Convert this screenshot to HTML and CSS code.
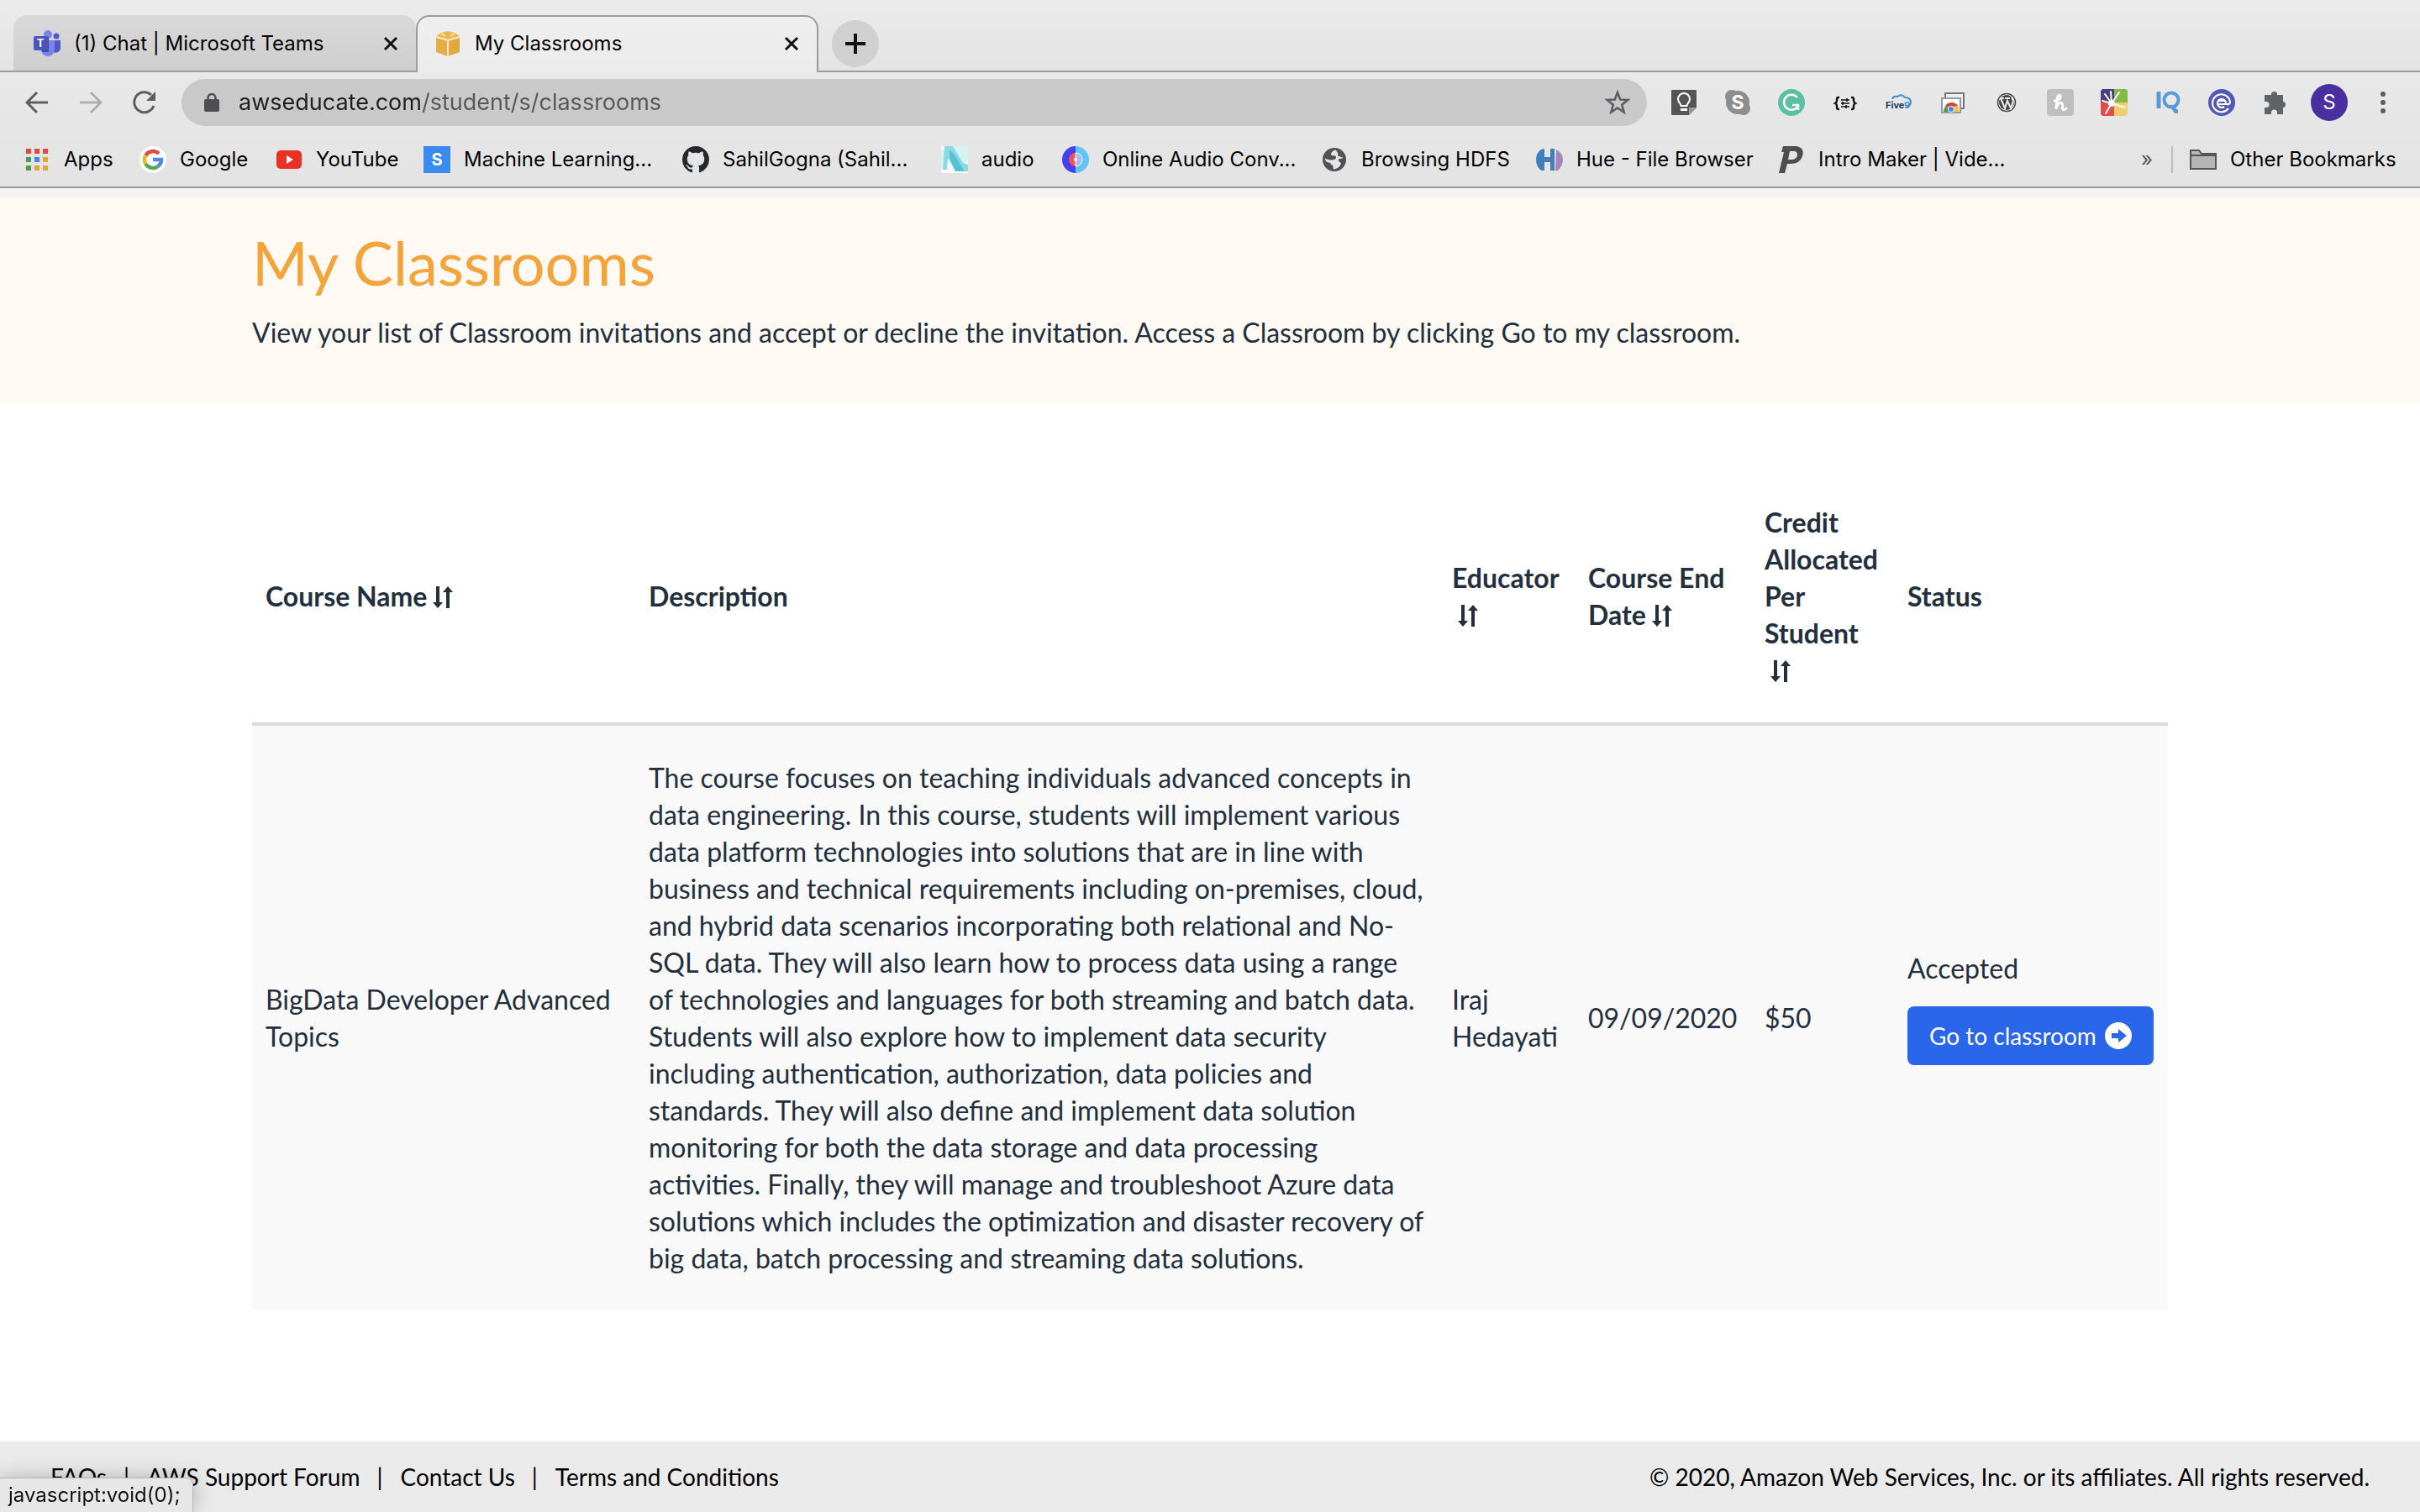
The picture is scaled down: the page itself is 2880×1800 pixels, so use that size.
FILE: index.html
```html
<!DOCTYPE html>
<html lang="en">
<head>
<meta charset="utf-8">
<title>My Classrooms</title>
<link rel="stylesheet" href="styles.css">
</head>
<body>
<svg class="defs" aria-hidden="true">
  <symbol id="close" viewBox="0 0 20 20"><path d="M3 3l14 14M17 3L3 17" fill="none" stroke="#111" stroke-width="3"/></symbol>
  <symbol id="sort" viewBox="0 0 24 26"><path d="M4 0h4v19h4l-6 7-6-7h4zM16 26h4V7h4l-6-7-6 7h4z" fill="#232f3e"/></symbol>
</svg>
<header class="browser">
  <div class="tabs">
    <div class="tab">
      <svg class="icon" viewBox="0 0 32 32"><circle cx="17" cy="5" r="5" fill="#7b83eb"/><circle cx="27" cy="7" r="3.5" fill="#5059c9"/><path d="M22 12h10v9a6 6 0 0 1-9 5z" fill="#5059c9"/><path d="M9 12h16v11a8 8 0 0 1-16 0z" fill="#7b83eb"/><path d="M9 8h9v18h-8z" fill="#4049a5"/><rect y="7" width="17" height="17" rx="2" fill="#4b53bc"/><text x="8" y="20" text-anchor="middle" class="glyph" font-size="13" fill="#fff">T</text></svg>
      <span class="tab-title">(1) Chat | Microsoft Teams</span>
      <button class="plain" aria-label="Close tab"><svg class="close"><use href="#close"/></svg></button>
    </div>
    <div class="tab active">
      <svg class="icon" viewBox="0 0 32 32"><path d="M2 8l14 4v19L2 26z" fill="#e5ad45"/><path d="M30 8l-14 4v19l14-5z" fill="#e2a840"/><path d="M2 7L8 3l8-2 8 2 6 4-14 4z" fill="#f0b746"/><path d="M16 11v20M2 8l14 4 14-4M8 4l5 3M24 4l-5 3" fill="none" stroke="#f8e6c3" stroke-width="2"/></svg>
      <span class="tab-title">My Classrooms</span>
      <button class="plain" aria-label="Close tab"><svg class="close"><use href="#close"/></svg></button>
    </div>
    <button class="new-tab" aria-label="New tab"><svg width="24" height="24" viewBox="0 0 24 24"><path d="M12 0v24M0 12h24" stroke="#111" stroke-width="4"/></svg></button>
  </div>
  <div class="toolbar">
    <button class="nav" aria-label="Back"><svg viewBox="0 0 28 28"><path d="M27 14H3M14 2L2 14l12 12" fill="none" stroke="#5b5e62" stroke-width="3"/></svg></button>
    <button class="nav" aria-label="Forward"><svg viewBox="0 0 28 28"><path d="M1 14h24M14 2l12 12-12 12" fill="none" stroke="#aeb0b2" stroke-width="3"/></svg></button>
    <button class="nav" aria-label="Reload"><svg viewBox="0 0 28 28"><path d="M25 18A12 12 0 1 1 22 5" fill="none" stroke="#5b5e62" stroke-width="3"/><path d="M27 1v11H16z" fill="#5b5e62"/></svg></button>
    <div class="address">
      <svg class="lock" width="18" height="22" viewBox="0 0 18 22"><rect y="7" width="18" height="15" rx="2" fill="#4d4f52"/><path d="M4.500 9V5.500a4.500 4.500 0 0 1 9 0V9" fill="none" stroke="#4d4f52" stroke-width="2.400"/></svg>
      <input class="url" type="text" aria-label="Address" value="awseducate.com/student/s/classrooms">
      <button class="plain" aria-label="Bookmark this page"><svg width="30" height="30" viewBox="0 0 30 30"><path d="M15 3l3.200 8.500 9 .5-7 5.700 2.400 8.800-7.600-5-7.600 5 2.400-8.800-7-5.700 9-.5z" fill="none" stroke="#5b5e62" stroke-width="2.600"/></svg></button>
    </div>
    <div class="extensions">
      <button class="ext" aria-label="Keep"><svg viewBox="0 0 32 32"><path d="M2 1h28a1 1 0 0 1 1 1v20l-9 9H2a1 1 0 0 1-1-1V2a1 1 0 0 1 1-1z" fill="#555"/><path d="M31 22l-9 9v-9z" fill="#999"/><path d="M12.500 20c0-3-3.500-4-3.500-8a7 7 0 0 1 14 0c0 4-3.500 5-3.500 8z" fill="none" stroke="#fff" stroke-width="2"/><path d="M12 23h8v3h-8z" fill="#fff"/></svg></button>
      <button class="ext" aria-label="Skype"><svg viewBox="0 0 32 32"><circle cx="16" cy="16" r="14" fill="#8d8d8d"/><circle cx="9" cy="9" r="8" fill="#8d8d8d"/><circle cx="23" cy="23" r="8" fill="#8d8d8d"/><text x="16" y="24" text-anchor="middle" class="glyph" font-size="23" fill="#fff">S</text></svg></button>
      <button class="ext" aria-label="Grammarly"><svg viewBox="0 0 32 32"><circle cx="16" cy="16" r="16" fill="#5bc0a0"/><path d="M23 10a9 9 0 1 0 1 10M17 19h7v6" fill="none" stroke="#fff" stroke-width="2.600"/></svg></button>
      <button class="ext" aria-label="JSON viewer"><svg viewBox="0 0 32 32"><path d="M9 10H8q-2 0-2 2v2q0 2-2 3 2 1 2 3v2q0 2 2 2h1M23 10h1q2 0 2 2v2q0 2 2 3-2 1-2 3v2q0 2-2 2h-1" fill="none" stroke="#111" stroke-width="2.400"/><path d="M11 13h10M11 17h10M11 21h10M18 11v4M13 15v4M17 19v4" stroke="#111" stroke-width="1.600"/></svg></button>
      <button class="ext" aria-label="Five9"><svg viewBox="0 0 32 32"><path d="M8 12q1-4 6-3 5-4 9 1 7 0 7 6-1 5-5 5" fill="none" stroke="#3f8fc8" stroke-width="2"/><text x="0" y="23" class="glyph" font-size="11" fill="#12385b">Five</text><text x="22" y="23" class="glyph" font-size="11" fill="#3f8fc8">9</text></svg></button>
      <button class="ext" aria-label="Remote desktop"><svg viewBox="0 0 32 32"><path d="M7 5h22v18H7z" fill="#eee" stroke="#777" stroke-width="2"/><path d="M3 11h22v17H3z" fill="#fff" stroke="#999" stroke-width="2"/><path d="M5 27a9 9 0 0 1 3-7l6 7z" fill="#45a05d"/><path d="M7 20a9 9 0 0 1 15 0l-8 4z" fill="#cf4539"/><path d="M22 20q2 3 1 7h-9v-6z" fill="#efc44d"/><circle cx="14" cy="24" r="3.500" fill="#4a7fe6" stroke="#fff"/></svg></button>
      <button class="ext" aria-label="WordPress"><svg viewBox="0 0 32 32"><circle cx="16" cy="16" r="10.500" fill="#fff" stroke="#464646" stroke-width="1.500"/><circle cx="16" cy="16" r="9" fill="#464646"/><path d="M9 11l5 12 3-9 4 9 3-9-2-4M8 11h5M14 11h6" fill="none" stroke="#eee" stroke-width="2"/></svg></button>
      <button class="ext" aria-label="Honey"><svg viewBox="0 0 32 32"><rect width="32" height="32" rx="4" fill="#bfbfbf"/><path d="M9 14c5 0 8-3 7-6-2-2-4 1-4 6l-1 10c1-6 4-9 7-7 2 2-1 5 1 7 1 1 3 0 4-1" fill="none" stroke="#fff" stroke-width="3" stroke-linecap="round"/></svg></button>
      <button class="ext" aria-label="Screen capture"><svg viewBox="0 0 32 32"><path d="M2 0h14v16H0V2z" fill="#4d3d86"/><path d="M16 0h14l2 2v14H16z" fill="#82bb49"/><path d="M0 16h16v16H2l-2-2z" fill="#df4e48"/><path d="M16 16h16v14l-2 2H16z" fill="#edce70"/><path d="M13 17L2 14M13 17L5 6M13 17L12 3M13 17L22 4M13 17l16 5M13 17L6 29" stroke="#fff" stroke-width="2" stroke-linecap="round"/><circle cx="13" cy="17" r="4" fill="#fff"/></svg></button>
      <button class="ext" aria-label="IQ"><svg viewBox="0 0 32 32"><path d="M5 3v20" stroke="#5b9bd3" stroke-width="5"/><circle cx="20" cy="13" r="8.500" fill="none" stroke="#5b9bd3" stroke-width="4"/><path d="M17 19h4l7 6v4h-4z" fill="#5b9bd3"/></svg></button>
      <button class="ext" aria-label="Email finder"><svg viewBox="0 0 32 32"><circle cx="16" cy="16" r="16" fill="#5357b5"/><path d="M24 23a10.500 10.500 0 1 1 2-7q-1 3-4 2H12M21 17a5 5 0 1 0-2 4M11 14h10" fill="none" stroke="#fff" stroke-width="2.200"/></svg></button>
      <button class="ext" aria-label="Extensions"><svg viewBox="0 0 32 32"><path d="M3 7h8V5a4 4 0 0 1 7 0v2h7v8h1a4 4 0 0 1 0 7h-1v8h-7v-2a3.500 3.500 0 0 0-7 0v2H3v-8h2a3.500 3.500 0 0 0 0-7H3z" fill="#5f6368"/></svg></button>
      <button class="ext" aria-label="Profile"><span class="avatar">S</span></button>
      <button class="ext" aria-label="Menu"><svg viewBox="0 0 32 32"><circle cx="16" cy="6" r="3" fill="#5b5e62"/><circle cx="16" cy="16" r="3" fill="#5b5e62"/><circle cx="16" cy="26" r="3" fill="#5b5e62"/></svg></button>
    </div>
  </div>
  <nav class="bookmarks">
    <a href="#"><svg class="icon" viewBox="0 0 32 32"><path d="M3 3h6v6H3zM13 3h6v6h-6zM23 3h6v6h-6z" fill="#e0493d"/><path d="M3 13h6v6H3zM3 23h6v6H3z" fill="#4b9a5a"/><path d="M13 13h6v6h-6z" fill="#3f86ee"/><path d="M23 13h6v6h-6zM13 23h6v6h-6zM23 23h6v6h-6z" fill="#e5a535"/></svg>Apps</a>
    <a href="#"><svg class="icon" viewBox="0 0 32 32"><circle cx="16" cy="16" r="16" fill="#fff"/><g fill="none" stroke-width="4.500"><path d="M23 9A10 10 0 0 0 7.300 11" stroke="#dc4e41"/><path d="M7.300 11a10 10 0 0 0 0 10" stroke="#f1b52b"/><path d="M7.300 21A10 10 0 0 0 22 24" stroke="#57a65a"/><path d="M16 16h10q0 5-4 8" stroke="#5087ec"/></g></svg>Google</a>
    <a href="#"><svg class="icon" viewBox="0 0 32 32"><rect x="1" y="5" width="30" height="22" rx="5" fill="#e93223"/><path d="M13 11l8 5-8 5z" fill="#fff"/></svg>YouTube</a>
    <a href="#"><svg class="icon" viewBox="0 0 32 32"><path d="M0 0h32v32H0z" fill="#3b8bee"/><text x="16" y="23" text-anchor="middle" class="glyph" font-size="20" fill="#fff">S</text></svg>Machine Learning...</a>
    <a href="#"><svg class="icon" viewBox="0 0 16 16"><path fill="#24292e" d="M8 0C3.580 0 0 3.580 0 8c0 3.540 2.290 6.530 5.470 7.590.4.070.55-.17.55-.38 0-.19-.01-.82-.01-1.490-2.010.37-2.530-.49-2.690-.94-.09-.23-.48-.94-.82-1.130-.28-.15-.68-.52-.01-.53.63-.01 1.080.58 1.230.82.72 1.210 1.870.87 2.330.66.070-.52.28-.87.51-1.070-1.780-.2-3.640-.89-3.640-3.950 0-.87.31-1.590.82-2.150-.08-.2-.36-1.020.08-2.120 0 0 .67-.21 2.200.82.64-.18 1.320-.27 2-.27s1.360.09 2 .27c1.530-1.040 2.200-.82 2.200-.82.44 1.100.16 1.920.08 2.120.51.56.82 1.270.82 2.150 0 3.070-1.870 3.750-3.650 3.950.29.25.54.73.54 1.480 0 1.070-.01 1.930-.01 2.200 0 .21.15.46.55.38A8 8 0 0 0 16 8c0-4.420-3.580-8-8-8z"/></svg>SahilGogna (Sahil...</a>
    <a href="#"><svg class="icon" viewBox="0 0 32 32"><path d="M0 0h32v32H0z" fill="#f6fdfd"/><path d="M0 4h4v22l-4 2z" fill="#d3f3f5"/><path d="M14 0h18v16l-4 6-8-8z" fill="#d3f3f5"/><path d="M4 0h10l12 20 6 2v8H17L8 14 7 28H2z" fill="#8bdae2"/><path d="M10 4l6 6 12 20H17L10 14z" fill="#55c3d1"/></svg>audio</a>
    <a href="#"><svg class="icon" viewBox="0 0 32 32"><path d="M16 0a16 16 0 0 0 0 32z" fill="#443ff0"/><path d="M16 0a16 16 0 0 1 0 32z" fill="#63c3fb"/><path d="M16 8a8 8 0 0 0 0 16z" fill="#ee5454"/><path d="M16 8a8 8 0 0 1 0 16z" fill="#a9b7f4" stroke="#fff"/><circle cx="16" cy="16" r="2" fill="#fff"/></svg>Online Audio Conv...</a>
    <a href="#"><svg class="icon" viewBox="0 0 32 32"><circle cx="16" cy="16" r="14" fill="#505256"/><path d="M17 4.500c-3 1-5 3-5 5 0 3 5 1 6 3 0 3-2 4-5 4-4 0-6-1-8-2 0 3 2 5 5 5 3 1 1 3 4 3 1 1 0 3 1 5 6-1 8-4 9-7-1-2-4-2-3-5 2-1 4-1 5-1 0-4-4-8-9-10z" fill="#e5e5e5"/><path d="M17 4.500c2 1 4 4 3 7l6 2c-1-5-4-8-9-9z" fill="#505256"/></svg>Browsing HDFS</a>
    <a href="#"><svg class="icon" viewBox="0 0 32 32"><path d="M24 4q8 4 8 12 0 7-6 13h-3z" fill="#a486bd"/><path d="M10 3v10h7V3h5v26h-5V19h-7v10H6q-6-5-6-13Q0 8 6 4z" fill="#3f7fbd"/></svg>Hue - File Browser</a>
    <a href="#"><svg class="icon" viewBox="0 0 32 32"><path d="M6 0h16q10 2 7 12-3 9-14 9h-4L8 32H1L7 7H4zM14 6l-2 10h4q6 0 7-5 0-5-4-5z" fill="#4d4d4d" fill-rule="evenodd"/></svg>Intro Maker | Vide...</a>
    <button class="plain more" aria-label="More bookmarks">»</button>
    <a class="other" href="#"><svg class="icon" viewBox="0 0 32 32"><path d="M1 5h10l3 4h17v18H1z" fill="#b5b5b5" stroke="#555" stroke-width="2"/><path d="M1 11h30" stroke="#555" stroke-width="2"/></svg>Other Bookmarks</a>
  </nav>
</header>
<main>
  <section class="banner">
    <div class="wrap">
      <h1>My Classrooms</h1>
      <p>View your list of Classroom invitations and accept or decline the invitation. Access a Classroom by clicking Go to my classroom.</p>
    </div>
  </section>
  <section class="wrap list">
    <table>
      <colgroup><col class="c-name"><col class="c-desc"><col class="c-edu"><col class="c-date"><col class="c-credit"><col></colgroup>
      <thead>
        <tr>
          <th scope="col">Course Name<button class="sort" aria-label="Sort by course name"><svg><use href="#sort"/></svg></button></th>
          <th scope="col">Description</th>
          <th scope="col">Educator<button class="sort" aria-label="Sort by educator"><svg><use href="#sort"/></svg></button></th>
          <th scope="col">Course End Date<button class="sort" aria-label="Sort by end date"><svg><use href="#sort"/></svg></button></th>
          <th scope="col">Credit Allocated Per Student<button class="sort" aria-label="Sort by credit"><svg><use href="#sort"/></svg></button></th>
          <th scope="col">Status</th>
        </tr>
      </thead>
      <tbody>
        <tr>
          <td>BigData Developer Advanced Topics</td>
          <td>The course focuses on teaching individuals advanced concepts in data engineering. In this course, students will implement various data platform technologies into solutions that are in line with business and technical requirements including on-premises, cloud, and hybrid data scenarios incorporating both relational and No-SQL data. They will also learn how to process data using a range of technologies and languages for both streaming and batch data. Students will also explore how to implement data security including authentication, authorization, data policies and standards. They will also define and implement data solution monitoring for both the data storage and data processing activities. Finally, they will manage and troubleshoot Azure data solutions which includes the optimization and disaster recovery of big data, batch processing and streaming data solutions.</td>
          <td>Iraj Hedayati</td>
          <td>09/09/2020</td>
          <td>$50</td>
          <td>Accepted
            <button class="go">Go to classroom<svg width="32" height="32" viewBox="0 0 32 32"><circle cx="16" cy="16" r="16" fill="#fff"/><path d="M8 13h8V8l10 8-10 8v-5H8z" fill="#2a66ea"/></svg></button>
          </td>
        </tr>
      </tbody>
    </table>
  </section>
</main>
<footer>
  <ul>
    <li><a href="#">FAQs</a></li>
    <li><a href="#">AWS Support Forum</a></li>
    <li><a href="#">Contact Us</a></li>
    <li><a href="#">Terms and Conditions</a></li>
  </ul>
  <span>© 2020, Amazon Web Services, Inc. or its affiliates. All rights reserved.</span>
</footer>
<div class="status">javascript:void(0);</div>
</body>
</html>
```
FILE: styles.css
```css
* { box-sizing: border-box; }
body {
  margin: 0;
  min-height: 100vh;
  display: flex;
  flex-direction: column;
  background: #fff;
  color: #232f3e;
  font: 32px/44px Lato, "Liberation Sans", sans-serif;
}
.defs { display: none; }
button { font: inherit; color: inherit; border: 0; padding: 0; background: none; }
a { color: inherit; text-decoration: none; }
svg { display: block; flex: none; }
.icon { width: 32px; height: 32px; }
.glyph { font-family: Inter, sans-serif; font-weight: 700; }

/* Browser chrome */
.browser {
  background: linear-gradient(#ececec, #e3e3e3);
  border-bottom: 2px solid #9c9c9c;
  box-shadow: 0 10px 0 #f3f3f3;
  margin-bottom: 10px;
  color: #000;
  font: 24px/32px Inter, "Liberation Sans", sans-serif;
}
.tabs {
  display: flex;
  align-items: flex-start;
  height: 86px;
  padding: 18px 16px 0;
  background: linear-gradient(#9c9c9c, #9c9c9c) bottom / 100% 2px no-repeat, linear-gradient(#ebebeb, #e4e4e4);
}
.tab {
  display: flex;
  align-items: center;
  gap: 16px;
  width: 479px;
  height: 66px;
  padding: 2px 20px 0 24px;
  border-radius: 16px 16px 0 0;
  background: linear-gradient(#d9d9d9, #cecece);
}
.tab.active {
  height: 68px;
  padding: 0 20px 2px;
  border: 2px solid #9c9c9c;
  border-bottom: 0;
  background: linear-gradient(#efefef, #ebebeb);
}
.tab-title { flex: 1; white-space: nowrap; }
.close { width: 20px; height: 20px; }
.new-tab {
  display: grid;
  place-items: center;
  width: 56px;
  height: 56px;
  margin: 6px 0 0 16px;
  border-radius: 50%;
  background: #d0d0d0;
}
.toolbar { display: flex; align-items: center; padding: 8px 12px 8px; }
.nav { width: 64px; height: 56px; display: grid; place-items: center; }
.nav svg { width: 28px; height: 28px; }
.address {
  flex: 1;
  display: flex;
  align-items: center;
  height: 56px;
  margin: 0 12px;
  padding: 0 20px 0 27px;
  border-radius: 28px;
  background: #c9c9c9;
}
.url {
  flex: 1;
  min-width: 0;
  margin-left: 23px;
  padding: 0;
  border: 0;
  font: 27px/40px Inter, "Liberation Sans", sans-serif;
  color: transparent;
  background: linear-gradient(90deg, #1d1e20 217px, #555759 0);
  -webkit-background-clip: text;
  background-clip: text;
}
.extensions { display: flex; }
.ext { width: 64px; height: 56px; display: grid; place-items: center; }
.ext svg { width: 32px; height: 32px; }
.avatar {
  width: 44px;
  height: 44px;
  border-radius: 50%;
  background: #4a2fa0;
  color: #fff;
  line-height: 44px;
}
.bookmarks {
  display: grid;
  grid-template-columns: 138px 162px 176px 308px 308px 144px 308px 256px 288px 406px 62px 1fr;
  align-items: center;
  height: 64px;
  padding: 0 28px;
  white-space: nowrap;
}
.bookmarks a { display: flex; align-items: center; gap: 16px; }
.more { color: #55585c; padding-left: 26px; text-align: left; }
.bookmarks .other { border-left: 2px solid #bcbcbc; padding-left: 20px; }

/* Page */
.wrap { max-width: 2280px; margin: 0 auto; }
.banner { padding: 34px 0 62px; background: #fef9f2; }
h1 { margin: 0; color: #f3a53c; font-weight: 400; font-size: 72px; line-height: 88px; }
p { margin: 18px 0 0; }
.list { padding: 80px 0; }
table { width: 100%; table-layout: fixed; border-collapse: separate; border-spacing: 0; }
.c-name { width: 456px; }
.c-desc { width: 956px; }
.c-edu { width: 162px; }
.c-date { width: 210px; }
.c-credit { width: 170px; }
th, td { padding: 40px 16px; text-align: left; vertical-align: middle; }
th { border-bottom: 4px solid #dcdcdc; font-weight: 700; }
td { background: #f9f9f9; }
.sort { display: inline-block; width: 32px; padding-left: 7px; vertical-align: -2px; }
.sort svg { width: 24px; height: 26px; }
.go {
  display: flex;
  align-items: center;
  gap: 10px;
  margin: 23px 0 25px;
  padding: 0 26px;
  height: 70px;
  border-radius: 8px;
  background: #2a66ea;
  color: #fff;
  font-size: 28px;
  white-space: nowrap;
}
footer {
  display: flex;
  justify-content: space-between;
  margin-top: auto;
  padding: 20px 60px;
  background: #eaeaea;
  color: #000;
  font-size: 28px;
}
ul { display: flex; margin: 0; padding: 0; list-style: none; }
li + li::before { content: "|"; margin: 0 21px 0 20px; }
.status {
  position: fixed;
  left: 0;
  bottom: 0;
  height: 41px;
  padding: 0 14px 0 10px;
  border-top: 1px solid #b5b5b5;
  border-right: 1px solid #b5b5b5;
  border-radius: 0 8px 0 0;
  background: #e7e7e7;
  box-shadow: 0 0 24px rgba(0, 0, 0, .25);
  color: #111;
  font: 24px/40px Inter, "Liberation Sans", sans-serif;
}
```
